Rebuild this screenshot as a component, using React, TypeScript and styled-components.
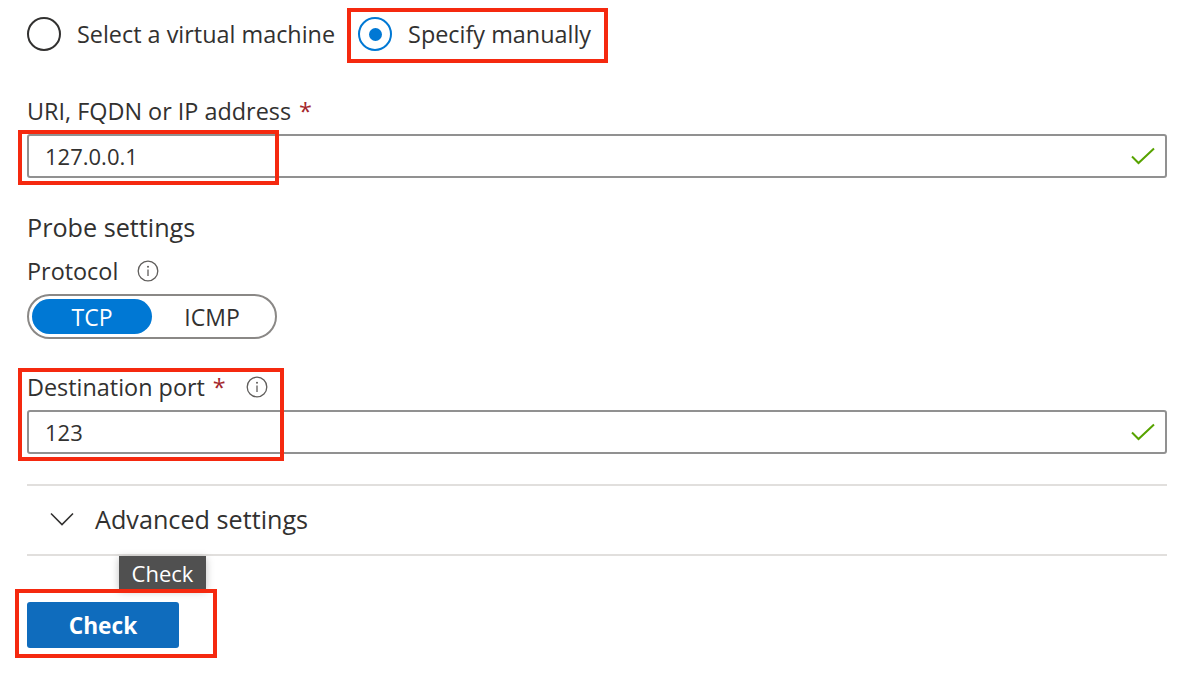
import React from "react"
import styled, {createGlobalStyle} from "styled-components"

const GlobalStyle = createGlobalStyle`
  html, body {
    margin: 0;
    padding: 0;
    background: #ffffff;
  }
  body {
    font-family: "Open Sans", "Noto Sans", Arial, sans-serif;
    color: #323130;
  }
`

const Page = styled.div`
  width: 1140px;
  min-height: 673px;
  padding: 0 33px 0 27px;
  display: flex;
  flex-direction: column;
`

const RadioRow = styled.div`
  height: 68px;
  display: flex;
  align-items: center;
  gap: 23px;
`

const RadioOption = styled.label`
  position: relative;
  display: flex;
  align-items: center;
  gap: 16px;
  font-size: 23.4px;
  line-height: 34px;
`

const RadioCircle = styled.span<{$checked?: boolean}>`
  box-sizing: border-box;
  width: 34px;
  height: 34px;
  border-radius: 50%;
  border: 2px solid ${(p) => (p.$checked ? "#0078d4" : "#323130")};
  display: flex;
  align-items: center;
  justify-content: center;
  &::after {
    content: "";
    display: ${(p) => (p.$checked ? "block" : "none")};
    width: 13px;
    height: 13px;
    border-radius: 50%;
    background: #0078d4;
  }
`

// red annotation frames drawn over the form
const RedBox = styled.span<{$top: number; $left: number; $w: number; $h: number}>`
  position: absolute;
  box-sizing: border-box;
  top: ${(p) => p.$top}px;
  left: ${(p) => p.$left}px;
  width: ${(p) => p.$w}px;
  height: ${(p) => p.$h}px;
  border: 4px solid #f5290f;
  pointer-events: none;
`

const Label = styled.div<{$mt: number}>`
  display: flex;
  align-items: center;
  margin-top: ${(p) => p.$mt}px;
  height: 30px;
  font-size: 23.4px;
`

const Heading = styled(Label)`
  font-size: 25.2px;
`

const Required = styled.span`
  color: #a4262c;
  margin-left: 8px;
`

const InfoWrap = styled.span<{$ml: number}>`
  display: inline-flex;
  margin-left: ${(p) => p.$ml}px;
`

const Field = styled.div`
  position: relative;
  margin-top: 8px;
`

const TextInput = styled.div`
  box-sizing: border-box;
  height: 44px;
  border: 2px solid #919191;
  border-radius: 3px;
  display: flex;
  align-items: center;
  justify-content: space-between;
  padding: 0 9px 0 16px;
  font-size: 22px;
`

const Toggle = styled.div`
  margin-top: 8px;
  box-sizing: border-box;
  width: 250px;
  height: 45px;
  border: 2px solid #8a8886;
  border-radius: 23px;
  padding: 3px;
  display: flex;
`

const Segment = styled.div<{$active?: boolean}>`
  width: 120px;
  height: 35px;
  border-radius: 18px;
  display: flex;
  align-items: center;
  justify-content: center;
  font-size: 23px;
  background: ${(p) => (p.$active ? "#0078d4" : "transparent")};
  color: ${(p) => (p.$active ? "#ffffff" : "#323130")};
`

const Accordion = styled.div`
  margin-top: 30px;
  box-sizing: border-box;
  height: 72px;
  padding: 0 0 3px 23px;
  border-top: 2px solid #e1dfdd;
  border-bottom: 2px solid #e1dfdd;
  display: flex;
  align-items: center;
  gap: 21px;
  font-size: 25.2px;
`

const ButtonArea = styled.div`
  position: relative;
  margin-top: 46px;
  align-self: flex-start;
`

const PrimaryButton = styled.button`
  box-sizing: border-box;
  width: 152px;
  height: 46px;
  border: none;
  border-radius: 3px;
  background: #0f6cbd;
  color: #ffffff;
  font-family: "Open Sans", "Noto Sans", Arial, sans-serif;
  font-weight: 700;
  font-size: 22.7px;
  display: flex;
  align-items: center;
  justify-content: center;
`

const Tooltip = styled.div`
  position: absolute;
  top: -46px;
  left: 92px;
  box-sizing: border-box;
  width: 87px;
  height: 33px;
  background: #505050;
  color: #ffffff;
  font-size: 22px;
  display: flex;
  align-items: center;
  justify-content: center;
  box-shadow: 0 2px 8px rgba(0, 0, 0, 0.25);
`

const InfoIcon = () => (
  <svg width="22" height="22" viewBox="0 0 22 22" fill="none">
    <circle cx="11" cy="11" r="9.8" stroke="#605e5c" strokeWidth="1.3" />
    <circle cx="11" cy="6.8" r="1" fill="#605e5c" />
    <path d="M11 9.5v6.5" stroke="#605e5c" strokeWidth="1.3" />
  </svg>
)

const CheckMark = () => (
  <svg width="26" height="18" viewBox="0 0 26 18" fill="none">
    <path d="M2 9.5l6.5 6.5L24 1.5" stroke="#57a300" strokeWidth="2" />
  </svg>
)

const Chevron = () => (
  <svg width="24" height="14" viewBox="0 0 24 14" fill="none">
    <path d="M1 1.5l11 11 11-11" stroke="#323130" strokeWidth="1.6" />
  </svg>
)

export default function App() {
  return (
    <>
      <GlobalStyle />
      <Page>
        <RadioRow>
          <RadioOption>
            <RadioCircle />
            Select a virtual machine
          </RadioOption>
          <RadioOption>
            <RadioCircle $checked />
            Specify manually
            <RedBox $top={-9} $left={-11} $w={261} $h={55} />
          </RadioOption>
        </RadioRow>

        <Label $mt={28}>
          URI, FQDN or IP address<Required>*</Required>
        </Label>
        <Field>
          <TextInput>
            127.0.0.1
            <CheckMark />
          </TextInput>
          <RedBox $top={-4} $left={-9} $w={261} $h={55} />
        </Field>

        <Heading $mt={34}>Probe settings</Heading>
        <Label $mt={14}>
          Protocol
          <InfoWrap $ml={19}>
            <InfoIcon />
          </InfoWrap>
        </Label>
        <Toggle>
          <Segment $active>TCP</Segment>
          <Segment>ICMP</Segment>
        </Toggle>

        <Label $mt={33}>
          Destination port<Required>*</Required>
          <InfoWrap $ml={20}>
            <InfoIcon />
          </InfoWrap>
        </Label>
        <Field>
          <TextInput>
            123
            <CheckMark />
          </TextInput>
          <RedBox $top={-42} $left={-9} $w={266} $h={93} />
        </Field>

        <Accordion>
          <Chevron />
          Advanced settings
        </Accordion>

        <ButtonArea>
          <Tooltip>Check</Tooltip>
          <PrimaryButton>Check</PrimaryButton>
          <RedBox $top={-13} $left={-12} $w={202} $h={69} />
        </ButtonArea>
      </Page>
    </>
  )
}
